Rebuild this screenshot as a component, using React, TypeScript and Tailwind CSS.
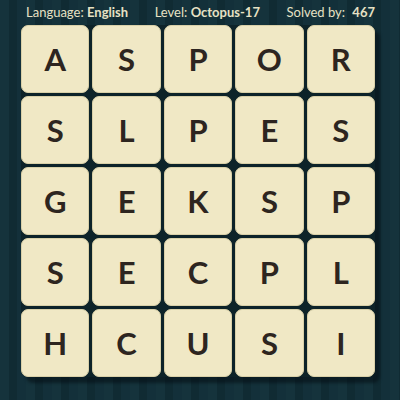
const rows = [
  ["A", "S", "P", "O", "R"],
  ["S", "L", "P", "E", "S"],
  ["G", "E", "K", "S", "P"],
  ["S", "E", "C", "P", "L"],
  ["H", "C", "U", "S", "I"],
];

export default function App() {
  return (
    <div
      className="w-[400px] h-[400px] overflow-hidden bg-[repeating-linear-gradient(90deg,#15333c_0px,#15333c_9px,#102b33_9px,#102b33_17px,#13303a_17px,#13303a_26px)]"
      style={{ fontFamily: "Lato, 'Open Sans', sans-serif" }}
    >
      {/* Header */}
      <div className="flex items-center justify-between h-[25px] pl-[26px] pr-[25px] pt-[1px] text-[13px] text-[#e6e1c4]">
        <span>
          Language: <b className="font-bold">English</b>
        </span>
        <span>
          Level: <b className="font-bold">Octopus-17</b>
        </span>
        <span>
          Solved by: <b className="font-bold ml-1">467</b>
        </span>
      </div>

      {/* Board */}
      <div className="ml-[21px] w-[354px] rounded-[7px] bg-[#0d2329] shadow-[5px_6px_3px_rgba(5,15,20,0.55)]">
        <div className="grid grid-cols-5 gap-[3px]">
          {rows.flat().map((l, i) => (
            <div
              key={i}
              className="h-[68px] rounded-[7px] bg-[#f0e8c5] border border-[#d9d0a8] flex items-center justify-center text-[31px] font-bold text-[#2d2520] leading-none"
            >
              {l}
            </div>
          ))}
        </div>
      </div>
    </div>
  );
}
